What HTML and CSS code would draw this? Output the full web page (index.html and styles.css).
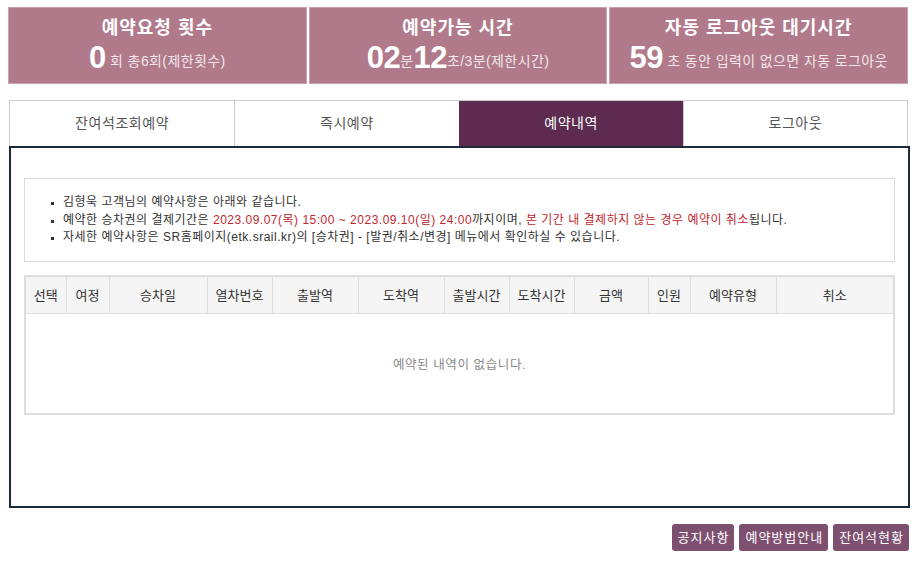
FILE: index.html
```html
<!DOCTYPE html>
<html lang="ko">
<head>
<meta charset="UTF-8" />
<meta name="viewport" content="width=device-width, initial-scale=1" />
<title>SR 예약내역</title>
<link rel="stylesheet" href="styles.css">
</head>
<body>
  <div class="stats">
    <div class="stat">
      <div class="stat-title">예약요청 횟수</div>
      <div class="stat-value"><b>0</b> 회 총6회(제한횟수)</div>
    </div>
    <div class="stat">
      <div class="stat-title">예약가능 시간</div>
      <div class="stat-value"><b>02</b>분<b>12</b>초/3분(제한시간)</div>
    </div>
    <div class="stat">
      <div class="stat-title">자동 로그아웃 대기시간</div>
      <div class="stat-value"><b>59</b> 초 동안 입력이 없으면 자동 로그아웃</div>
    </div>
  </div>

  <div class="tabs">
    <div class="tab">잔여석조회예약</div>
    <div class="tab">즉시예약</div>
    <div class="tab active">예약내역</div>
    <div class="tab">로그아웃</div>
  </div>

  <div class="panel">
    <div class="notice">
      <ul>
        <li>김형욱 고객님의 예약사항은 아래와 같습니다.</li>
        <li>예약한 승차권의 결제기간은 <span class="red">2023.09.07(목) 15:00 ~ 2023.09.10(일) 24:00</span>까지이며, <span class="red">본 기간 내 결제하지 않는 경우 예약이 취소</span>됩니다.</li>
        <li>자세한 예약사항은 SR홈페이지(etk.srail.kr)의 [승차권] - [발권/취소/변경] 메뉴에서 확인하실 수 있습니다.</li>
      </ul>
    </div>

    <table class="list">
      <thead>
        <tr>
          <th class="c1">선택</th>
          <th class="c2">여정</th>
          <th class="c3">승차일</th>
          <th class="c4">열차번호</th>
          <th class="c5">출발역</th>
          <th class="c5">도착역</th>
          <th class="c6">출발시간</th>
          <th class="c6">도착시간</th>
          <th class="c7">금액</th>
          <th class="c8">인원</th>
          <th class="c5">예약유형</th>
          <th>취소</th>
        </tr>
      </thead>
      <tbody>
        <tr>
          <td colspan="12" class="empty">예약된 내역이 없습니다.</td>
        </tr>
      </tbody>
    </table>
  </div>

  <div class="links">
    <a href="#" class="btn">공지사항</a>
    <a href="#" class="btn">예약방법안내</a>
    <a href="#" class="btn">잔여석현황</a>
  </div>
</body>
</html>
```

FILE: styles.css
```css
* {
  box-sizing: border-box;
}
body {
  margin: 0;
  padding: 7px 7px 0 8px;
  font-family: "Liberation Sans", "Noto Sans CJK KR", sans-serif;
  color: #333;
  background: #fff;
}

/* 상단 카운터 */
.stats {
  display: grid;
  grid-template-columns: 1fr 1fr 1fr;
  gap: 2px;
  width: 900px;
}
.stat {
  background: #b07a8b;
  border: 1px solid #c9a3b0;
  height: 77px;
  color: #fff;
  text-align: center;
  padding-top: 7px;
}
.stat-title {
  font-size: 18px;
  font-weight: bold;
  line-height: 26px;
  letter-spacing: 1px;
}
.stat-value {
  font-size: 14px;
  color: #f3e6ea;
  line-height: 33px;
  letter-spacing: 0.4px;
}
.stat-value b {
  font-size: 31px;
  color: #fff;
  vertical-align: -2px;
  letter-spacing: -0.5px;
}

/* 탭 */
.tabs {
  display: grid;
  grid-template-columns: repeat(4, 1fr);
  margin: 16px 0 0 1px;
  width: 899px;
  border: 1px solid #ccc;
  border-bottom: none;
}
.tab {
  height: 45px;
  line-height: 45px;
  text-align: center;
  font-size: 14px;
  letter-spacing: 0.6px;
  color: #555;
  border-left: 1px solid #ccc;
}
.tab:first-child {
  border-left: none;
}
.tab.active {
  background: #5c2b4f;
  color: #fff;
  border-left-color: #5c2b4f;
}

/* 본문 */
.panel {
  margin-left: 1px;
  width: 901px;
  height: 362px;
  border: 2px solid #1c2b3a;
  padding: 30px 13px 0 13px;
}
.notice {
  border: 1px solid #ddd;
  height: 84px;
  padding-top: 15px;
}
.notice ul {
  margin: 0;
  padding-left: 38px;
  list-style: square;
  font-size: 12px;
  letter-spacing: 0.5px;
  line-height: 17.5px;
  color: #333;
}
.notice li::marker {
  font-size: 9px;
}
.red {
  color: #c1272d;
}

.list {
  margin-top: 13px;
  width: 100%;
  border-collapse: collapse;
  border: 2px solid #ddd;
  font-size: 13px;
}
.list th {
  background: #f5f5f5;
  font-weight: normal;
  color: #333;
  height: 37px;
  border-left: 1px solid #ddd;
  border-bottom: 1px solid #ddd;
  padding: 0;
}
.list th:first-child {
  border-left: none;
}
.c1 { width: 41px; }
.c2 { width: 43px; }
.c3 { width: 98px; }
.c4 { width: 65px; }
.c5 { width: 86px; }
.c6 { width: 65px; }
.c7 { width: 74px; }
.c8 { width: 42px; }
.empty {
  height: 101px;
  text-align: center;
  font-size: 12.5px;
  letter-spacing: 0.6px;
  color: #888;
}

/* 하단 버튼 */
.links {
  display: flex;
  justify-content: flex-end;
  gap: 5px;
  width: 901px;
  margin-top: 16px;
}
.btn {
  display: block;
  background: #7e5070;
  color: #fff;
  text-decoration: none;
  font-size: 13px;
  letter-spacing: 1px;
  line-height: 27px;
  padding: 0 5px 0 6px;
  border-radius: 3px;
}
```
